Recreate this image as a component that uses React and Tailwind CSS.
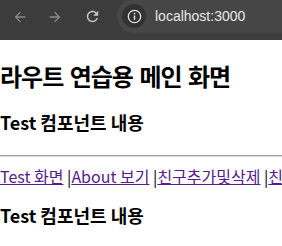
const BackIcon = ({ className }) => (
  <svg className={className} viewBox="0 0 24 24" fill="currentColor">
    <path d="M20 11H7.83l5.59-5.59L12 4l-8 8 8 8 1.41-1.41L7.83 13H20v-2z" />
  </svg>
);

const ForwardIcon = ({ className }) => (
  <svg className={className} viewBox="0 0 24 24" fill="currentColor">
    <path d="M4 11h12.17l-5.59-5.59L12 4l8 8-8 8-1.41-1.41L16.17 13H4v-2z" />
  </svg>
);

const ReloadIcon = ({ className }) => (
  <svg className={className} viewBox="0 0 24 24" fill="currentColor">
    <path d="M17.65 6.35C16.2 4.9 14.21 4 12 4c-4.42 0-7.990 3.58-7.99 8s3.57 8 7.99 8c3.73 0 6.84-2.55 7.730-6h-2.08c-.82 2.33-3.04 4-5.65 4-3.31 0-6-2.69-6-6s2.69-6 6-6c1.66 0 3.14.69 4.22 1.78L13 11h7V4l-2.35 2.35z" />
  </svg>
);

const InfoIcon = ({ className }) => (
  <svg className={className} viewBox="0 0 16 16" fill="none" stroke="currentColor">
    <circle cx="8" cy="8" r="6.6" strokeWidth="1.4" />
    <line x1="8" y1="7" x2="8" y2="11.5" strokeWidth="1.6" />
    <circle cx="8" cy="4.9" r="0.9" fill="currentColor" stroke="none" />
  </svg>
);

const Toolbar = () => (
  <div className="h-[40px] overflow-hidden bg-[#3c3c3c]">
    <div className="flex h-[33px] items-center">
      <BackIcon className="ml-[12px] h-[16px] w-[16px] shrink-0 text-[#8b8b8b]" />
      <ForwardIcon className="ml-[19px] h-[16px] w-[16px] shrink-0 text-[#8b8b8b]" />
      <ReloadIcon className="ml-[21px] h-[17px] w-[17px] shrink-0 text-[#c7c7c7]" />
      <div className="-mt-px ml-[16px] flex h-[34px] flex-1 items-center rounded-l-full bg-[#464646] pl-[5px]">
        <div className="flex h-[24px] w-[24px] shrink-0 items-center justify-center rounded-full bg-[#323232]">
          <InfoIcon className="h-[15px] w-[15px] text-[#e3e3e3]" />
        </div>
        <span className="ml-[9px] whitespace-nowrap font-['Liberation_Sans',sans-serif] text-[14px] text-[#e8e8e8]">
          localhost:3000
        </span>
      </div>
    </div>
  </div>
);

const App = () => {
  const links = ['Test 화면', 'About 보기', '친구추가및삭제', '친구목록'];

  return (
    <div className="h-[246px] w-[282px] overflow-hidden bg-white">
      <Toolbar />
      <div className="font-['Noto_Sans_CJK_KR',sans-serif] text-black">
        <h1 className="mt-[22px] whitespace-nowrap text-[24px] font-bold leading-[28px] tracking-[-1px] [word-spacing:2px]">
          라우트 연습용 메인 화면
        </h1>
        <h3 className="mt-[20px] whitespace-nowrap text-[18px] font-bold leading-[24px]">Test 컴포넌트 내용</h3>
        <div className="mt-[21px] border-t border-b border-t-[#9c9c9c] border-b-[#dedede]" />
        <div className="mt-[7px] whitespace-nowrap text-[16px] leading-[24px]">
          {links.map((label, index) => (
            <span key={label}>
              {index > 0 && ' |'}
              <a className="text-[#551a8b] underline" href="#">
                {label}
              </a>
            </span>
          ))}
        </div>
        <h3 className="mt-[15px] whitespace-nowrap text-[18px] font-bold leading-[24px]">Test 컴포넌트 내용</h3>
      </div>
    </div>
  );
};

export default App;
